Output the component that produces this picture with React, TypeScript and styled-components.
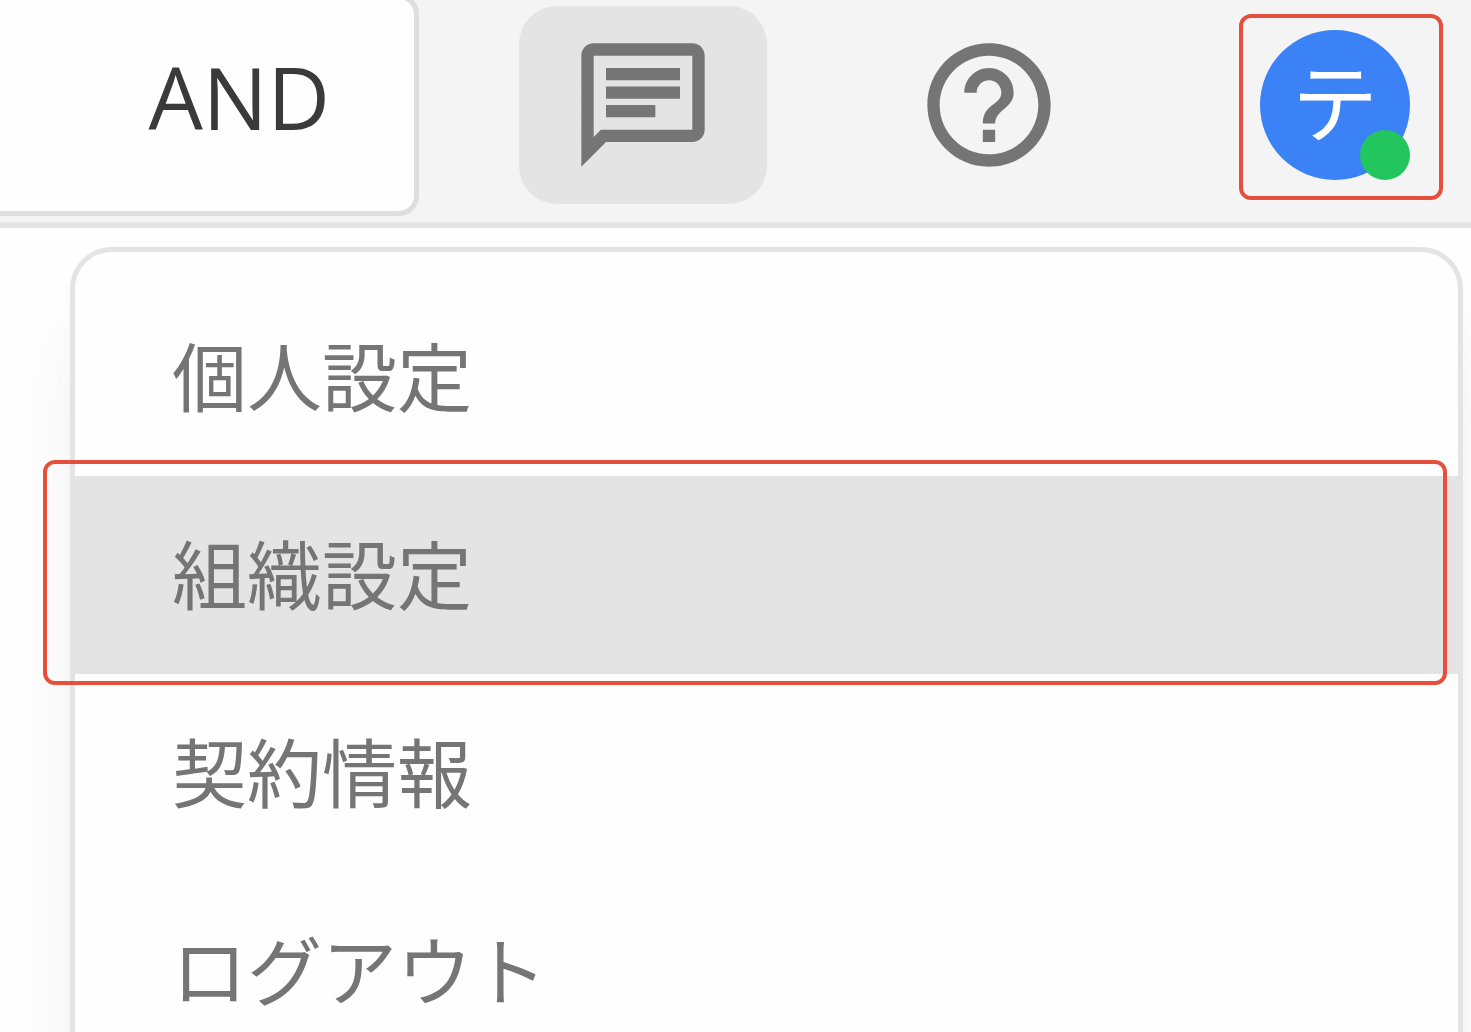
import React from "react";
import styled, { createGlobalStyle } from "styled-components";

const GlobalStyle = createGlobalStyle`
  *, *::before, *::after { box-sizing: border-box; }
  body {
    margin: 0;
    background: #fefefe;
    font-family: "Open Sans", "Noto Sans CJK JP", sans-serif;
    color: #757575;
  }
  button { font: inherit; color: inherit; border: 0; background: none; padding: 0; cursor: pointer; }
`;

const Page = styled.div`
  height: 100vh;
  overflow: hidden;
  display: flex;
  flex-direction: column;
`;

const Header = styled.header`
  flex: none;
  display: flex;
  align-items: flex-start;
  gap: 100px;
  padding: 0 12px 6px 0;
  background: #f4f4f4;
  border-bottom: 6px solid #e4e4e4;
`;

const SearchBox = styled.form`
  flex: 1;
  min-width: 0;
  display: flex;
  align-items: center;
  height: 222px;
  margin-top: -6px;
  border: 5px solid #dedede;
  border-left: 0;
  border-radius: 0 20px 20px 0;
  background: #fefefe;
`;

const SearchInput = styled.input`
  flex: 1;
  min-width: 0;
  height: 100%;
  border: 0;
  outline: 0;
  background: transparent;
  font: inherit;
`;

const ModeButton = styled.button`
  && {
    margin-right: 84px;
    padding-bottom: 16px;
    font-size: 86px;
    line-height: 120px;
    color: #3a3a3a;
  }
`;

const Actions = styled.nav`
  flex: none;
  display: flex;
  gap: 98px;
  padding-top: 6px;
`;

const ActionButton = styled.button<{ $active?: boolean }>`
  && {
    position: relative;
    display: flex;
    align-items: center;
    justify-content: center;
    width: 248px;
    height: 198px;
    border-radius: 38px;
    background: ${(p) => (p.$active ? "#e4e4e4" : "transparent")};
  }
`;

const Icon = styled.svg`
  width: 148px;
  height: 148px;
  fill: #757575;
`;

const Avatar = styled.span`
  position: relative;
  display: flex;
  align-items: center;
  justify-content: center;
  width: 150px;
  height: 150px;
  padding-bottom: 12px;
  border-radius: 50%;
  background: #3b82f6;
  color: #fff;
  font-family: "Noto Sans CJK JP", sans-serif;
  font-size: 86px;
  line-height: 86px;
`;

const StatusDot = styled.span`
  position: absolute;
  right: 0;
  bottom: 0;
  width: 50px;
  height: 50px;
  border-radius: 50%;
  background: #22c55e;
`;

const Marker = styled.span<{ $inset: string }>`
  position: absolute;
  inset: ${(p) => p.$inset};
  border: 4px solid #e64f3c;
  border-radius: 12px;
  pointer-events: none;
`;

const Menu = styled.ul`
  flex: none;
  list-style: none;
  margin: 19px 8px 0 70px;
  padding: 26px 0;
  border: 5px solid #e4e4e4;
  border-radius: 42px;
  background: #fefefe;
  box-shadow: 0 62px 93px -18px rgba(0, 0, 0, 0.07), 0 25px 37px -25px rgba(0, 0, 0, 0.08);
`;

const MenuRow = styled.li`
  position: relative;
`;

const MenuButton = styled.button<{ $active?: boolean }>`
  && {
    display: block;
    width: 100%;
    height: 198px;
    padding: 0 97px 6px;
    text-align: left;
    font-family: "Noto Sans CJK JP", sans-serif;
    font-size: 75px;
    line-height: 100px;
    background: ${(p) => (p.$active ? "#e4e4e4" : "transparent")};
  }
`;

const items = ["個人設定", "組織設定", "契約情報", "ログアウト"];
const current = "組織設定";

export default function App() {
  return (
    <Page>
      <GlobalStyle />
      <Header>
        <SearchBox>
          <SearchInput type="text" aria-label="検索" />
          <ModeButton type="button">AND</ModeButton>
        </SearchBox>
        <Actions>
          <ActionButton type="button" $active aria-label="メッセージ">
            <Icon viewBox="0 0 24 24">
              <path d="M4 4h16v12H5.17L4 17.17V4m0-2c-1.1 0-2 .9-2 2v18l4-4h14c1.1 0 2-.9 2-2V4c0-1.1-.9-2-2-2H4zm2 10h8v2H6v-2zm0-3h12v2H6V9zm0-3h12v2H6V6z" />
            </Icon>
          </ActionButton>
          <ActionButton type="button" aria-label="ヘルプ">
            <Icon viewBox="0 0 24 24">
              <path d="M11 18h2v-2h-2v2zm1-16C6.48 2 2 6.48 2 12s4.48 10 10 10 10-4.48 10-10S17.52 2 12 2zm0 18c-4.41 0-8-3.59-8-8s3.59-8 8-8 8 3.59 8 8-3.59 8-8 8zm0-14c-2.21 0-4 1.79-4 4h2c0-1.1.9-2 2-2s2 .9 2 2c0 2-3 1.75-3 5h2c0-2.25 3-2.5 3-5 0-2.21-1.79-4-4-4z" />
            </Icon>
          </ActionButton>
          <ActionButton type="button" aria-haspopup="menu" aria-expanded="true">
            <Avatar>
              テ
              <StatusDot />
            </Avatar>
            <Marker $inset="8px 16px 4px 28px" />
          </ActionButton>
        </Actions>
      </Header>
      <Menu>
        {items.map((item) => (
          <MenuRow key={item}>
            <MenuButton type="button" $active={item === current}>
              {item}
            </MenuButton>
            {item === current && <Marker $inset="-16px 11px -11px -32px" />}
          </MenuRow>
        ))}
      </Menu>
    </Page>
  );
}
